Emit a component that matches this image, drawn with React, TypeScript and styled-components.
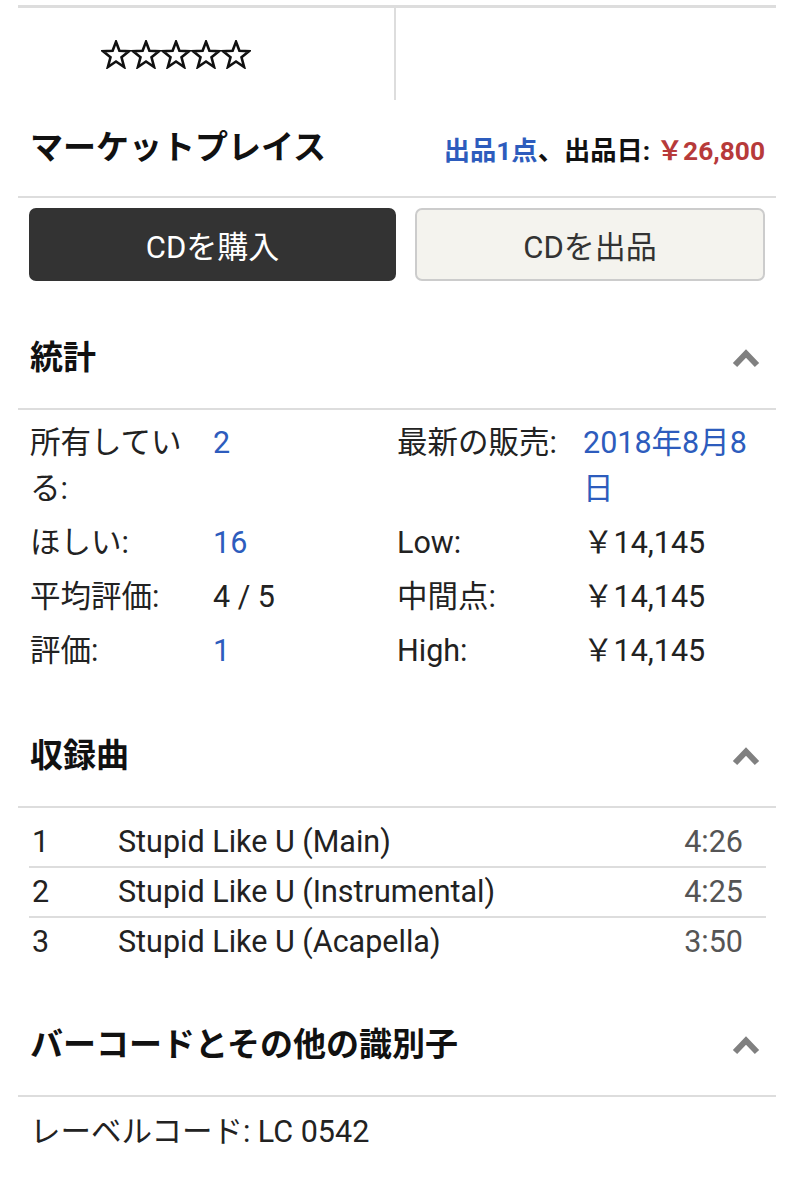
import React from "react";
import styled, {createGlobalStyle} from "styled-components";

//=============== GLOBAL ==================
const GlobalStyle = createGlobalStyle`
  body {
    margin: 0;
    background: #fff;
    font-family: Roboto, "Noto Sans CJK JP", sans-serif;
    color: #222;
  }
`;

//=============== STYLED ==================
const Page = styled.div`
  padding: 5px 18px 0;
`;

const RatingRow = styled.div`
  display: grid;
  grid-template-columns: 378px 1fr;
  border-top: 3px solid #ddd;
`;

const RatingCell = styled.div`
  height: 92px;
  display: flex;
  align-items: center;
  padding-left: 83px;
  border-right: 2px solid #ddd;
`;

const MarketHeader = styled.div`
  height: 96px;
  display: flex;
  align-items: center;
  justify-content: space-between;
  padding: 0 11px 0 12px;
  border-bottom: 2px solid #ddd;
`;

const H2 = styled.h2`
  margin: 0;
  font-size: 33px;
  font-weight: bold;
  color: #111;
  line-height: 1.2;
`;

const MarketInfo = styled.div`
  font-size: 26.3px;
  font-weight: bold;
  color: #111;
`;

const Link = styled.span`
  color: #2d5cbd;
`;

const Price = styled.span`
  color: #b73a3a;
`;

const Buttons = styled.div`
  display: grid;
  grid-template-columns: 367px 350px;
  gap: 19px;
  padding: 10px 0 0 11px;
`;

const Button = styled.button<{ $dark?: boolean }>`
  height: 73px;
  border-radius: 7px;
  font-family: Roboto, "Noto Sans CJK JP", sans-serif;
  font-size: 31px;
  background: ${p => (p.$dark ? "#333" : "#f4f3ee")};
  color: ${p => (p.$dark ? "#fff" : "#333")};
  border: 2px solid ${p => (p.$dark ? "#333" : "#ccc")};
  cursor: pointer;
`;

const SectionHeader = styled.div<{ $top: number }>`
  height: 100px;
  margin-top: ${p => p.$top}px;
  display: flex;
  align-items: center;
  justify-content: space-between;
  padding: 0 16px 0 12px;
  border-bottom: 2px solid #ddd;
`;

const Stats = styled.div`
  padding: 6px 0 0 12px;
`;

const StatRow = styled.div`
  display: grid;
  grid-template-columns: 183px 184px 186px 170px;
  padding: 4px 0;
  font-size: 30.5px;
  line-height: 46px;
`;

const Label = styled.div`
  padding-right: 14px;
`;

const Value = styled.div<{ $link?: boolean }>`
  color: ${p => (p.$link ? "#2d5cbd" : "#222")};
`;

const Tracks = styled.div`
  margin: 10px 10px 0 11px;
`;

const Track = styled.div`
  display: grid;
  grid-template-columns: 86px 1fr auto;
  padding: 1px 23px 1px 3px;
  font-size: 30.5px;
  line-height: 46px;
  & + & {
    border-top: 2px solid #ddd;
  }
`;

const Duration = styled.span`
  color: #555;
`;

const Identifier = styled.div`
  padding: 12px 0 0 12px;
  font-size: 30.5px;
  line-height: 46px;
`;

//============== ICONS =====================
const Star = () => (
  <svg width="30" height="29" viewBox="0 0 30 29">
    <polygon
      points="15,1.8 18.4,10.8 28,11.2 20.5,17.3 23.1,27 15,21.5 6.9,27 9.5,17.3 2,11.2 11.6,10.8"
      fill="none"
      stroke="#111"
      strokeWidth="2.6"
      strokeLinejoin="miter"
    />
  </svg>
);

const Chevron = () => (
  <svg width="28" height="20" viewBox="0 0 28 20">
    <polyline points="3,17 14,5.5 25,17" fill="none" stroke="#808080" strokeWidth="6" />
  </svg>
);

//============== DATA ================
const stats = [
  {l1: "所有している:", v1: "2", link1: true, l2: "最新の販売:", v2: "2018年8月8日", link2: true},
  {l1: "ほしい:", v1: "16", link1: true, l2: "Low:", v2: "￥14,145", link2: false},
  {l1: "平均評価:", v1: "4 / 5", link1: false, l2: "中間点:", v2: "￥14,145", link2: false},
  {l1: "評価:", v1: "1", link1: true, l2: "High:", v2: "￥14,145", link2: false},
];

const tracks = [
  {n: "1", title: "Stupid Like U (Main)", time: "4:26"},
  {n: "2", title: "Stupid Like U (Instrumental)", time: "4:25"},
  {n: "3", title: "Stupid Like U (Acapella)", time: "3:50"},
];

//============== COMPONENT =====================
const App: React.FC = () => {
  return (
    <Page>
      <GlobalStyle/>
      <RatingRow>
        <RatingCell>
          {[0, 1, 2, 3, 4].map(i => <Star key={i}/>)}
        </RatingCell>
        <div/>
      </RatingRow>

      <MarketHeader>
        <H2>マーケットプレイス</H2>
        <MarketInfo>
          <Link>出品1点</Link>、出品日: <Price>￥26,800</Price>
        </MarketInfo>
      </MarketHeader>

      <Buttons>
        <Button $dark>CDを購入</Button>
        <Button>CDを出品</Button>
      </Buttons>

      <SectionHeader $top={27}>
        <H2>統計</H2>
        <Chevron/>
      </SectionHeader>
      <Stats>
        {stats.map(s => (
          <StatRow key={s.l1}>
            <Label>{s.l1}</Label>
            <Value $link={s.link1}>{s.v1}</Value>
            <Label>{s.l2}</Label>
            <Value $link={s.link2}>{s.v2}</Value>
          </StatRow>
        ))}
      </Stats>

      <SectionHeader $top={28}>
        <H2>収録曲</H2>
        <Chevron/>
      </SectionHeader>
      <Tracks>
        {tracks.map(t => (
          <Track key={t.n}>
            <span>{t.n}</span>
            <span>{t.title}</span>
            <Duration>{t.time}</Duration>
          </Track>
        ))}
      </Tracks>

      <SectionHeader $top={29}>
        <H2>バーコードとその他の識別子</H2>
        <Chevron/>
      </SectionHeader>
      <Identifier>レーベルコード: LC 0542</Identifier>
    </Page>
  );
};
export default App;
